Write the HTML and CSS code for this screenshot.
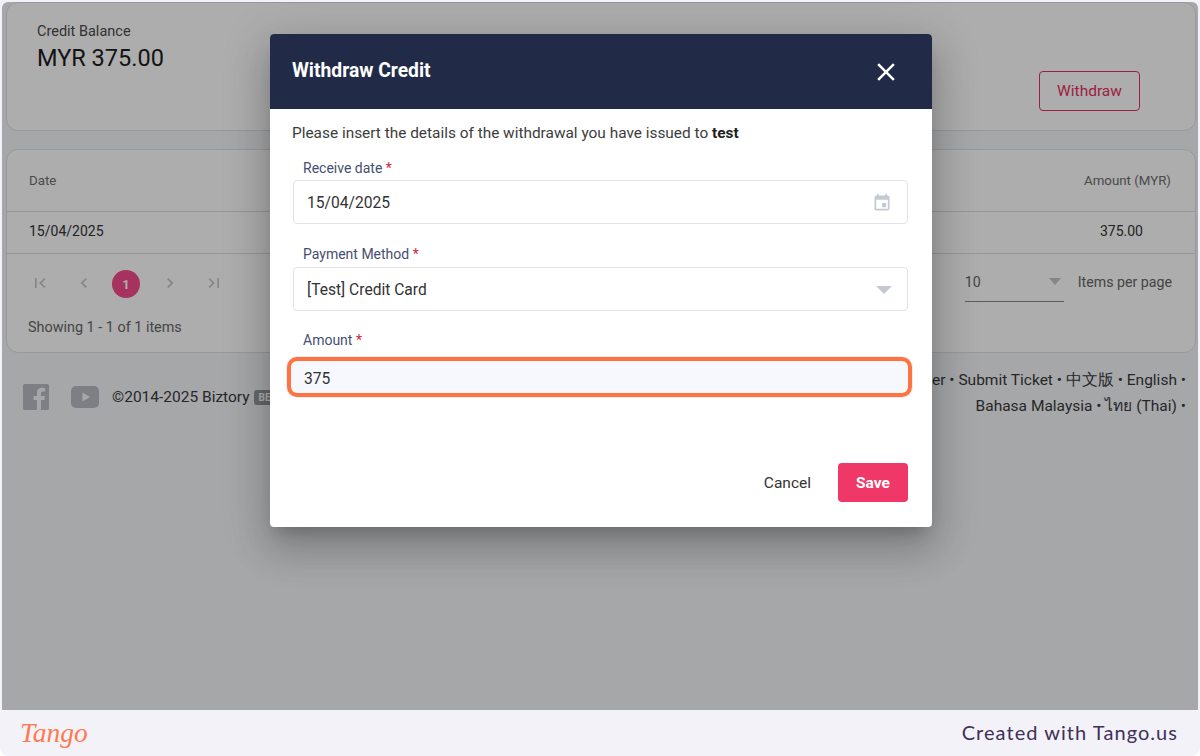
FILE: index.html
```html
<!DOCTYPE html>
<html lang="en">
<head>
    <meta charset="UTF-8">
    <title>Withdraw Credit</title>
    <link rel="stylesheet" href="styles.css">
</head>
<body>
    <div class="frame">
        <div class="shot">
            <div class="page">
                <section class="card balance-card">
                    <div class="balance-info">
                        <div class="balance-label">Credit Balance</div>
                        <div class="balance-value">MYR 375.00</div>
                    </div>
                    <button class="btn-outline">Withdraw</button>
                </section>

                <section class="card table-card">
                    <div class="table-row table-head">
                        <span>Date</span>
                        <span>Amount (MYR)</span>
                    </div>
                    <div class="table-row table-body">
                        <span>15/04/2025</span>
                        <span class="cell-amount">375.00</span>
                    </div>
                    <div class="pager">
                        <div class="pager-left">
                            <div class="pager-links">
                                <svg class="pager-icon" viewBox="0 0 24 24"><path d="M18.41 16.59L13.82 12l4.59-4.59L17 6l-6 6 6 6zM6 6h2v12H6z"/></svg>
                                <svg class="pager-icon" viewBox="0 0 24 24"><path d="M15.41 7.41L14 6l-6 6 6 6 1.41-1.41L10.83 12z"/></svg>
                                <span class="pager-current">1</span>
                                <svg class="pager-icon" viewBox="0 0 24 24"><path d="M10 6L8.59 7.41 13.17 12l-4.58 4.59L10 18l6-6z"/></svg>
                                <svg class="pager-icon" viewBox="0 0 24 24"><path d="M5.59 7.41L10.18 12l-4.59 4.59L7 18l6-6-6-6zM16 6h2v12h-2z"/></svg>
                            </div>
                            <div class="pager-info">Showing 1 - 1 of 1 items</div>
                        </div>
                        <div class="pager-size">
                            <div class="size-select">
                                <span>10</span>
                                <span class="size-arrow"></span>
                            </div>
                            <span>Items per page</span>
                        </div>
                    </div>
                </section>

                <footer class="site-footer">
                    <div class="footer-left">
                        <svg class="icon-fb" viewBox="0 0 26 26"><path d="M1.5 0h23A1.5 1.5 0 0 1 26 1.5v23a1.5 1.5 0 0 1-1.5 1.5H18V16h3.4l.5-4H18V9.500c0-1.200.4-2 2-2h2.100V4c-.4 0-1.600-.2-3-.2-3 0-5.100 1.800-5.100 5.200V12h-3.400v4H14v10H1.500A1.500 1.500 0 0 1 0 24.500v-23A1.500 1.500 0 0 1 1.500 0z"/></svg>
                        <svg class="icon-yt" viewBox="0 0 28 22"><path d="M5 0h18a5 5 0 0 1 5 5v12a5 5 0 0 1-5 5H5a5 5 0 0 1-5-5V5a5 5 0 0 1 5-5zm6.500 6.500v9l7.500-4.500z" fill-rule="evenodd"/></svg>
                        <span class="copyright">©2014-2025 Biztory</span>
                        <span class="beta">BETA</span>
                    </div>
                    <div class="footer-right">
                        <div>Become a Partner • Submit Ticket • 中文版 • English •</div>
                        <div>Bahasa Malaysia • ไทย (Thai) •</div>
                    </div>
                </footer>
            </div>

            <div class="backdrop">
                <div class="modal">
                    <header class="modal-head">
                        <h2>Withdraw Credit</h2>
                        <svg class="modal-close" viewBox="0 0 24 24"><path d="M19 6.410L17.590 5 12 10.590 6.410 5 5 6.410 10.590 12 5 17.590 6.410 19 12 13.410 17.590 19 19 17.590 13.410 12z"/></svg>
                    </header>
                    <div class="modal-body">
                        <p class="modal-intro">Please insert the details of the withdrawal you have issued to <strong>test</strong></p>

                        <div class="field field-date">
                            <label>Receive date <em>*</em></label>
                            <div class="input-box">
                                <span>15/04/2025</span>
                                <svg class="input-icon" viewBox="0 0 24 24"><path d="M17 12h-5v5h5v-5zM16 1v2H8V1H6v2H5c-1.110 0-1.990.9-1.990 2L3 19c0 1.100.89 2 2 2h14c1.100 0 2-.9 2-2V5c0-1.100-.9-2-2-2h-1V1h-2zm3 18H5V8h14v11z"/></svg>
                            </div>
                        </div>

                        <div class="field field-method">
                            <label>Payment Method <em>*</em></label>
                            <div class="input-box">
                                <span>[Test] Credit Card</span>
                                <span class="select-arrow"></span>
                            </div>
                        </div>

                        <div class="field field-amount">
                            <label>Amount <em>*</em></label>
                            <div class="input-box input-active">
                                <span>375</span>
                            </div>
                        </div>

                        <div class="modal-actions">
                            <button class="btn-text">Cancel</button>
                            <button class="btn-save">Save</button>
                        </div>
                    </div>
                </div>
            </div>
        </div>

        <div class="tango-bar">
            <span class="tango-logo">Tango</span>
            <span class="tango-credit">Created with Tango.us</span>
        </div>
    </div>
</body>
</html>
```

FILE: styles.css
```css
*, *::before, *::after {
    box-sizing: border-box;
    margin: 0;
    padding: 0;
}
body {
    font-family: Roboto, "Liberation Sans", sans-serif;
    background-color: #ffffff;
    color: #2b2b2b;
    overflow: hidden;
}
button {
    font-family: inherit;
    cursor: pointer;
}
.frame {
    height: 756px;
    display: flex;
    flex-direction: column;
    background-color: #f3f2f8;
    border-radius: 0 0 8px 8px;
    padding-top: 2px;
}
.shot {
    flex: 1;
    margin: 0 2px;
    position: relative;
    overflow: hidden;
    background-color: #f5f7fa;
    border-radius: 6px 6px 0 0;
}
.page {
    padding: 0 2px 0 4px;
}

/* cards */
.card {
    background-color: #ffffff;
    border: 1px solid #dfe0e2;
    border-radius: 12px;
}
.balance-card {
    height: 129px;
    display: flex;
    justify-content: space-between;
    padding: 20px 55px 20px 30px;
}
.balance-label {
    font-size: 14.5px;
    line-height: 18px;
    color: #4a4a4a;
}
.balance-value {
    font-size: 23.5px;
    line-height: 32px;
    margin-top: 1px;
    color: #1c1c1c;
}
.btn-outline {
    align-self: flex-start;
    width: 101px;
    height: 40px;
    margin-top: 48px;
    background-color: #ffffff;
    border: 1px solid #e8305f;
    border-radius: 4px;
    color: #e8305f;
    font-size: 15.5px;
}

/* table */
.table-card {
    margin-top: 18px;
    height: 204px;
}
.table-row {
    display: flex;
    justify-content: space-between;
    align-items: center;
    padding: 0 24px 0 22px;
    border-bottom: 1px solid #dcdde1;
}
.table-head {
    height: 62px;
    font-size: 13.3px;
    color: #6e6e6e;
}
.table-body {
    height: 42px;
    font-size: 14px;
    color: #333333;
    padding-bottom: 3px;
}
.cell-amount {
    padding-right: 28px;
}
.pager {
    display: flex;
    justify-content: space-between;
    padding: 15px 23px 0 21px;
    font-size: 14.2px;
    color: #666666;
}
.pager-links {
    display: flex;
    align-items: center;
    gap: 24px;
    height: 28px;
    padding-left: 2px;
}
.pager-icon {
    width: 20px;
    height: 20px;
    fill: #c4c6cb;
}
.pager-current {
    width: 28px;
    height: 28px;
    margin: 2px -4px 0 -6px;
    border-radius: 50%;
    background-color: #f54a8c;
    color: #ffffff;
    font-size: 13px;
    font-weight: 700;
    display: flex;
    align-items: center;
    justify-content: center;
}
.pager-info {
    margin-top: 22px;
    font-size: 14.4px;
    line-height: 18px;
}
.pager-size {
    display: flex;
    gap: 14px;
    line-height: 26px;
}
.size-select {
    width: 99px;
    height: 33px;
    padding: 0 3px 7px 0;
    display: flex;
    justify-content: space-between;
    align-items: center;
    border-bottom: 1px solid #8b8b8b;
}
.size-arrow {
    border-left: 6px solid transparent;
    border-right: 6px solid transparent;
    border-top: 7px solid #c4c6cb;
}

/* footer */
.site-footer {
    display: flex;
    justify-content: space-between;
    padding: 13px 10px 0 17px;
    font-size: 15.5px;
    color: #3a3a3a;
}
.footer-left {
    display: flex;
    align-items: center;
    height: 46px;
    padding-top: 16px;
}
.icon-fb {
    width: 26px;
    height: 26px;
    fill: #b9bcc3;
}
.icon-yt {
    width: 28px;
    height: 22px;
    margin-left: 22px;
    fill: #b9bcc3;
}
.copyright {
    margin-left: 13px;
}
.beta {
    margin-left: 4px;
    padding: 2px 5px;
    border-radius: 3px;
    background-color: #9a9a9a;
    color: #ffffff;
    font-size: 10px;
    font-weight: 700;
}
.footer-right {
    text-align: right;
    line-height: 26px;
    padding-top: 1px;
}

/* modal */
.backdrop {
    position: absolute;
    inset: 0;
    background-color: rgba(0, 0, 0, 0.32);
    display: flex;
    justify-content: center;
    align-items: flex-start;
    padding: 32px 0 0 2px;
}
.modal {
    width: 662px;
    height: 493px;
    background-color: #ffffff;
    border-radius: 4px;
    overflow: hidden;
    box-shadow: 0 11px 15px -7px rgba(0, 0, 0, 0.2), 0 24px 38px 3px rgba(0, 0, 0, 0.14), 0 9px 46px 8px rgba(0, 0, 0, 0.12);
}
.modal-head {
    height: 75px;
    background-color: #212b48;
    display: flex;
    justify-content: space-between;
    align-items: center;
    padding: 0 31px 0 22px;
}
.modal-head h2 {
    font-size: 19.3px;
    font-weight: 700;
    color: #ffffff;
    margin-top: -3px;
}
.modal-close {
    width: 30px;
    height: 30px;
    fill: #ffffff;
    margin-top: 1px;
}
.modal-body {
    padding: 15px 24px 0 22px;
}
.modal-intro {
    font-size: 15.4px;
    line-height: 18px;
    color: #3c3c3c;
}
.modal-intro strong {
    color: #1f1f1f;
}
.field {
    margin-left: 1px;
}
.field label {
    display: block;
    padding-left: 10px;
    font-size: 14px;
    line-height: 18px;
    color: #454f70;
}
.field em {
    font-style: normal;
    color: #d81e3c;
}
.field-date {
    margin-top: 17px;
}
.field-method {
    margin-top: 21px;
}
.field-method .input-box {
    margin-top: 4px;
}
.field-amount {
    margin-top: 20px;
}
.input-box {
    height: 44px;
    margin-top: 3px;
    padding: 1px 13px 0;
    border: 1px solid #e2e3e7;
    border-radius: 4px;
    display: flex;
    justify-content: space-between;
    align-items: center;
    font-size: 15.6px;
    color: #333333;
}
.input-icon {
    width: 20px;
    height: 20px;
    fill: #c5c9d3;
    margin-right: 2px;
}
.select-arrow {
    margin-right: 2px;
    border-left: 8px solid transparent;
    border-right: 8px solid transparent;
    border-top: 8px solid #c5c9d3;
}
.input-active {
    height: 40px;
    margin: 8px -4px 0 -6px;
    padding: 3px 13px 0;
    border: 4px solid #ff7340;
    border-radius: 10px;
    background-color: #f6f8fd;
    box-shadow: 0 0 0 1px #eceef3;
}
.modal-actions {
    display: flex;
    justify-content: flex-end;
    align-items: center;
    gap: 27px;
    margin-top: 66px;
}
.btn-text {
    background: none;
    border: none;
    font-size: 15.5px;
    color: #333333;
}
.btn-save {
    width: 70px;
    height: 39px;
    background-color: #ef3868;
    border: none;
    border-radius: 4px;
    color: #ffffff;
    font-size: 15.5px;
    font-weight: 700;
}

/* tango bar */
.tango-bar {
    height: 46px;
    display: flex;
    justify-content: space-between;
    align-items: center;
    padding: 0 22px 0 20px;
}
.tango-logo {
    font-family: "Liberation Serif", serif;
    font-style: italic;
    font-size: 27.5px;
    line-height: 46px;
    color: #ff7a50;
}
.tango-credit {
    font-family: Lato, sans-serif;
    font-size: 20px;
    letter-spacing: 1.05px;
    margin-top: -2px;
    color: #3f3057;
}
```
